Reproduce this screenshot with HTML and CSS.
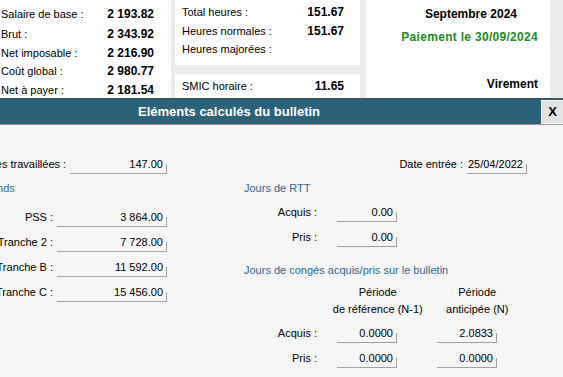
FILE: index.html
```html
<!DOCTYPE html>
<html lang="fr">
<head>
    <meta charset="UTF-8">
    <title>Eléments calculés du bulletin</title>
    <link rel="stylesheet" href="styles.css">
</head>
<body>

    <!-- Résumé du bulletin -->
    <div class="summary">
        <div class="panel panel-totals">
            <div class="line first"><span>Salaire de base :</span><b>2 193.82</b></div>
            <div class="line"><span>Brut :</span><b>2 343.92</b></div>
            <div class="line"><span>Net imposable :</span><b>2 216.90</b></div>
            <div class="line"><span>Coût global :</span><b>2 980.77</b></div>
            <div class="line"><span>Net à payer :</span><b>2 181.54</b></div>
        </div>

        <div class="middle">
            <div class="panel panel-hours">
                <div class="line"><span>Total heures :</span><b>151.67</b></div>
                <div class="line"><span>Heures normales :</span><b>151.67</b></div>
                <div class="line"><span>Heures majorées :</span><b></b></div>
            </div>
            <div class="panel panel-smic">
                <div class="line"><span>SMIC horaire :</span><b>11.65</b></div>
            </div>
        </div>

        <div class="panel panel-period">
            <div class="month">Septembre 2024</div>
            <div class="payment">Paiement le 30/09/2024</div>
            <div class="mode">Virement</div>
        </div>
    </div>

    <!-- Fenêtre -->
    <div class="dialog">
        <div class="title-bar">
            <span></span>
            <h1>Eléments calculés du bulletin</h1>
            <button class="close-btn">X</button>
        </div>

        <div class="dialog-body">
            <div class="col-left">
                <div class="row">
                    <label>Heures travaillées :</label>
                    <div class="field w100">147.00</div>
                </div>
                <div class="group-title">Plafonds</div>
                <div class="row">
                    <label>PSS :</label>
                    <div class="field w110">3 864.00</div>
                </div>
                <div class="row">
                    <label>Tranche 2 :</label>
                    <div class="field w110">7 728.00</div>
                </div>
                <div class="row">
                    <label>Tranche B :</label>
                    <div class="field w110">11 592.00</div>
                </div>
                <div class="row">
                    <label>Tranche C :</label>
                    <div class="field w110">15 456.00</div>
                </div>
            </div>

            <div class="col-right">
                <div class="row date-row">
                    <label>Date entrée :</label>
                    <div class="field w60">25/04/2022</div>
                </div>
                <div class="group-title">Jours de RTT</div>
                <div class="row">
                    <label class="lbl">Acquis :</label>
                    <div class="field w60">0.00</div>
                </div>
                <div class="row">
                    <label class="lbl">Pris :</label>
                    <div class="field w60">0.00</div>
                </div>

                <div class="group-title conges">Jours de congés acquis/pris sur le bulletin</div>
                <div class="col-heads">
                    <div>Période<br>de référence (N-1)</div>
                    <div>Période<br>anticipée (N)</div>
                </div>
                <div class="row">
                    <label class="lbl">Acquis :</label>
                    <div class="field w60">0.0000</div>
                    <div class="field w60 second">2.0833</div>
                </div>
                <div class="row">
                    <label class="lbl">Pris :</label>
                    <div class="field w60">0.0000</div>
                    <div class="field w60 second">0.0000</div>
                </div>
            </div>
        </div>
    </div>

</body>
</html>
```

FILE: styles.css
```css
body {
    margin: 0;
    padding: 0;
    font-family: "Liberation Sans", Arial, sans-serif;
    font-size: 11px;
    color: #000;
    background: #f6f6f6;
    overflow: hidden;
}

/* Summary panels */
.summary {
    display: flex;
    height: 98px;
    background: #ebebeb;
    overflow: hidden;
}

.panel {
    background: #fff;
}

.line {
    display: flex;
    justify-content: space-between;
    align-items: baseline;
    height: 18.5px;
    line-height: 18px;
}

.line b {
    font-size: 12px;
}

.panel-totals {
    width: 171px;
    padding: 5px 17px 0 1px;
    box-sizing: border-box;
}

.panel-totals .first {
    height: 20px;
}

.middle {
    width: 185px;
    margin-left: 4px;
    display: flex;
    flex-direction: column;
    gap: 9px;
}

.panel-hours {
    height: 65px;
    padding: 3px 16px 0 7px;
    box-sizing: border-box;
}

.panel-smic {
    flex-grow: 1;
    padding: 3px 16px 0 7px;
}

.panel-period {
    width: 184px;
    margin-left: 6px;
    padding: 5px 12px 0 0;
    box-sizing: border-box;
    text-align: right;
    font-weight: bold;
    font-size: 12px;
    line-height: 18px;
}

.month {
    padding-right: 21px;
}

.payment {
    margin-top: 5px;
    color: #218a21;
    letter-spacing: 0.3px;
}

.mode {
    margin-top: 29px;
}

/* Dialog */
.dialog {
    width: 668px;
    margin-left: -105px;
}

.title-bar {
    display: grid;
    grid-template-columns: 22px 1fr 22px;
    align-items: center;
    height: 25px;
    background: #2b627a;
    border-top: 1px solid #4d4d4d;
    border-bottom: 1px solid #9a9a9a;
}

.title-bar h1 {
    margin: 0;
    text-align: center;
    color: #fff;
    font-size: 13px;
    font-weight: bold;
}

.close-btn {
    height: 24px;
    padding: 0;
    border: 1px solid #f4f4f4;
    border-right: none;
    background: #e2e2e2;
    font-family: "Liberation Sans", Arial, sans-serif;
    font-size: 13px;
    font-weight: bold;
    color: #000;
}

.dialog-body {
    display: flex;
    padding: 24px 0 0 77px;
}

.col-left {
    width: 195px;
}

.col-right {
    width: 283px;
    margin-left: 77px;
}

.row {
    display: flex;
    justify-content: flex-end;
    align-items: flex-end;
    height: 25px;
}

.row label {
    line-height: 18px;
    padding-bottom: 1px;
    margin-right: 4px;
    white-space: nowrap;
}

.col-right .row {
    justify-content: flex-start;
}

.col-right .date-row {
    justify-content: flex-end;
}

.col-right .lbl {
    width: 73px;
    text-align: right;
    margin-right: 20px;
}

.field {
    position: relative;
    height: 19px;
    line-height: 18px;
    box-sizing: border-box;
    padding-right: 4px;
    text-align: right;
    border-bottom: 1px solid #a0a0a0;
}

.field::after {
    content: "";
    position: absolute;
    right: 0;
    bottom: 0;
    height: 9px;
    border-right: 1px solid #a0a0a0;
}

.w100 { width: 100px; }
.w110 { width: 110px; }
.w60 { width: 60px; }

.field.second {
    margin-left: 40px;
}

.group-title {
    color: #2e6694;
    line-height: 13px;
    margin: 8px 0 7px;
}

.col-right .group-title {
    margin: 8px 0 2px;
}

.col-right .conges {
    margin: 17px 0 7px;
}

.col-heads {
    display: flex;
    margin-left: 84px;
    line-height: 17px;
    text-align: center;
}

.col-heads div {
    width: 100px;
}
```
